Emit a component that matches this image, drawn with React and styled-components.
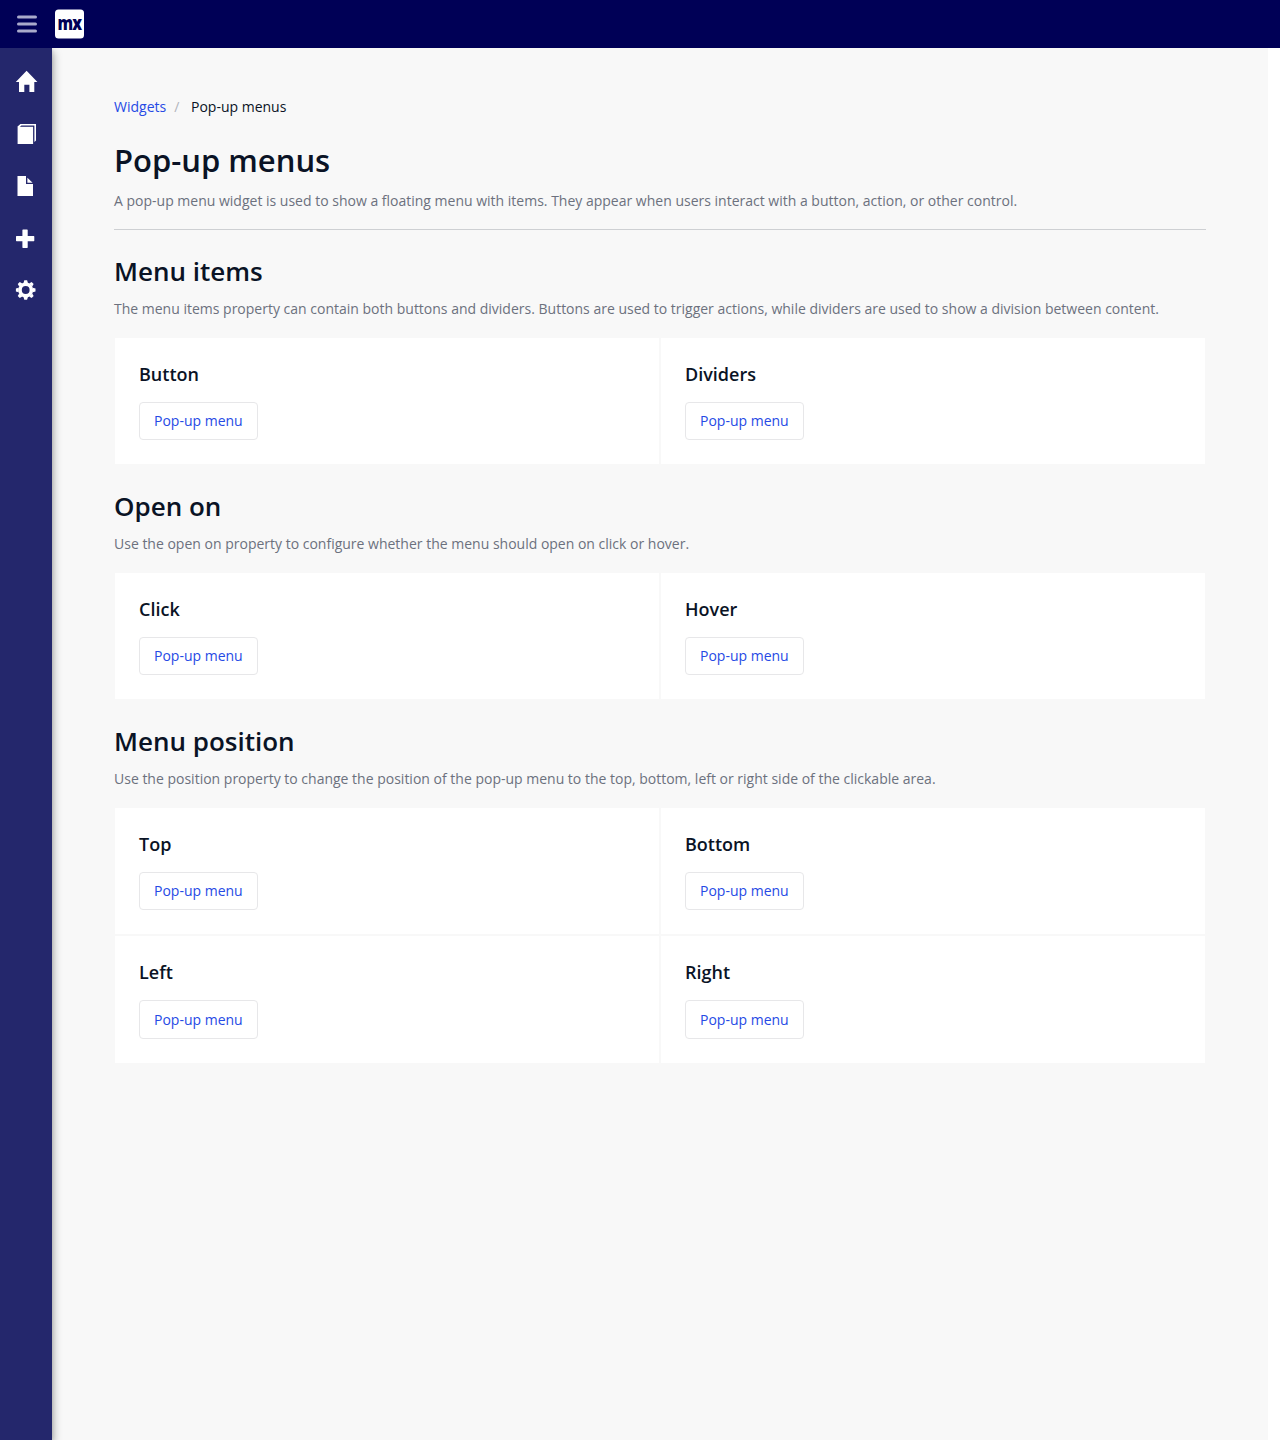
import React from 'react';
import styled, { createGlobalStyle } from 'styled-components';

const Global = createGlobalStyle`
  * { box-sizing: border-box; }
  body {
    margin: 0;
    background: #fff;
    color: #0a1325;
    font-family: "Open Sans", sans-serif;
    font-size: 14px;
    line-height: 20px;
  }
`;

const Page = styled.div`
  display: flex;
  flex-direction: column;
  min-height: 100vh;
`;
const TopBar = styled.header`
  display: flex;
  align-items: center;
  height: 48px;
  padding-left: 17px;
  gap: 18px;
  background: #000056;
`;
const Toggle = styled.svg`
  display: block;
  width: 20px;
  height: 48px;
  fill: #a9aacb;
`;
const Logo = styled.svg`
  display: block;
  width: 29px;
  height: 30px;
  overflow: visible;
`;
const Body = styled.div`
  display: flex;
  flex: 1;
`;
const Sidebar = styled.nav`
  display: flex;
  flex-direction: column;
  width: 52px;
  padding-top: 8px;
  background: #24276c;
  box-shadow: 0 0 4px rgba(0, 0, 0, 0.14), 2px 4px 8px rgba(0, 0, 0, 0.28);
  clip-path: inset(0 -16px 0 0);
  z-index: 1;
`;
const NavLink = styled.a`
  display: block;
  height: 52px;
  svg { display: block; fill: #fff; }
`;
const Content = styled.main`
  flex: 1;
  margin-right: 12px;
  padding: 49px 62px 0;
  background: #f8f8f8;
`;
const Breadcrumb = styled.ol`
  display: flex;
  margin: 0 0 22px;
  padding: 0;
  list-style: none;
`;
const Crumb = styled.li`
  a { color: #264ae5; text-decoration: none; }
  & + &::before {
    content: "/";
    padding: 0 11.7px 0 8px;
    color: #b2b5bc;
  }
`;
const Title = styled.h1`
  margin: 0 0 10px;
  font-size: 31px;
  line-height: 42px;
  font-weight: 600;
`;
const Lead = styled.p`
  margin: 0;
  color: #6c717e;
`;
const PageHeader = styled.div`
  height: 91.4px;
  border-bottom: 1px solid #ced0d3;
`;
const Section = styled.section`
  padding-top: 24.8px;
`;
const SectionTitle = styled.h2`
  margin: 0 0 10.2px;
  font-size: 26px;
  line-height: 33.8px;
  font-weight: 600;
`;
const Grid = styled.div`
  display: grid;
  grid-template-columns: 1fr 1fr;
  margin-top: 18px;
`;
const Card = styled.div`
  padding: 24px;
  border: 1px solid #f8f8f8;
  background: #fff;
`;
const CardTitle = styled.h4`
  margin: 0 0 14px;
  font-size: 18px;
  line-height: 25.4px;
  font-weight: 600;
`;
const Button = styled.button`
  display: block;
  padding: 8.8px 14px 8px;
  border: 1px solid #e7e7e9;
  border-radius: 4px;
  background: #fff;
  color: #264ae5;
  font: inherit;
`;

const gearTeeth = [0, 45, 90, 135, 180, 225, 270, 315];

const icons = {
  home: <path d="M26.6 14.8 37.4 25.9H34.3V36H29.4V28.7H24.3V36H19V25.9H15.8Z" />,
  book: (
    <>
      <path d="M17.6 18.8H33.1V36H17.6Z" />
      <path d="M17.6 19V18.6L20.4 16H36V32.6L34.4 34V17.5H21.4L19.8 19Z" />
    </>
  ),
  file: (
    <>
      <path d="M17.5 16H26V24H33V36H17.5Z" />
      <path d="M27.4 17.7 32.6 22.7H27.4Z" />
    </>
  ),
  plus: <path d="M23.4 17.4H27.2L27.7 17.9V24H33.8L34.3 24.5V28.8L33.8 29.3H27.7V35.5L27.2 36H22.9L22.4 35.5V29.3H16.5L16 28.8V24.5L16.5 24H22.4V17.9L22.9 17.4Z" />,
  gear: (
    <g transform="translate(25.7 26)">
      <path fillRule="evenodd" d="M0-7.5A7.5 7.5 0 1 1 0 7.5A7.5 7.5 0 1 1 0-7.5M0-3.9A3.9 3.9 0 1 0 0 3.9A3.9 3.9 0 1 0 0-3.9" />
      {gearTeeth.map((a) => (
        <path key={a} d="M-2.2-7 L-1.4-9.8H1.4L2.2-7Z" transform={`rotate(${a})`} />
      ))}
    </g>
  ),
};

const sections = [
  {
    title: 'Menu items',
    text: 'The menu items property can contain both buttons and dividers. Buttons are used to trigger actions, while dividers are used to show a division between content.',
    cards: ['Button', 'Dividers'],
  },
  {
    title: 'Open on',
    text: 'Use the open on property to configure whether the menu should open on click or hover.',
    cards: ['Click', 'Hover'],
  },
  {
    title: 'Menu position',
    text: 'Use the position property to change the position of the pop-up menu to the top, bottom, left or right side of the clickable area.',
    cards: ['Top', 'Bottom', 'Left', 'Right'],
  },
];

export default function App() {
  return (
    <Page>
      <Global />
      <TopBar>
        <Toggle viewBox="0 0 20 48" aria-label="Toggle sidebar">
          {[15.4, 22.4, 29.4].map((y) => (
            <rect key={y} y={y} width="20" height="3.1" rx="1.5" />
          ))}
        </Toggle>
        <Logo viewBox="0 0 29 30">
          <rect y=".5" width="29" height="29" rx="3.5" fill="#fff" />
          <text transform="translate(2.6 21) scale(.78 1)" letterSpacing="-1.2" fontFamily="Open Sans" fontWeight="800" fontSize="20" fill="#000056">mx</text>
        </Logo>
      </TopBar>
      <Body>
        <Sidebar>
          {Object.keys(icons).map((name) => (
            <NavLink key={name} aria-label={name}>
              <svg width="52" height="52" viewBox="0 0 52 52">{icons[name]}</svg>
            </NavLink>
          ))}
        </Sidebar>
        <Content>
          <Breadcrumb>
            <Crumb><a>Widgets</a></Crumb>
            <Crumb>Pop-up menus</Crumb>
          </Breadcrumb>
          <PageHeader>
            <Title>Pop-up menus</Title>
            <Lead>A pop-up menu widget is used to show a floating menu with items. They appear when users interact with a button, action, or other control.</Lead>
          </PageHeader>
          {sections.map((s) => (
            <Section key={s.title}>
              <SectionTitle>{s.title}</SectionTitle>
              <Lead>{s.text}</Lead>
              <Grid>
                {s.cards.map((c) => (
                  <Card key={c}>
                    <CardTitle>{c}</CardTitle>
                    <Button>Pop-up menu</Button>
                  </Card>
                ))}
              </Grid>
            </Section>
          ))}
        </Content>
      </Body>
    </Page>
  );
}
